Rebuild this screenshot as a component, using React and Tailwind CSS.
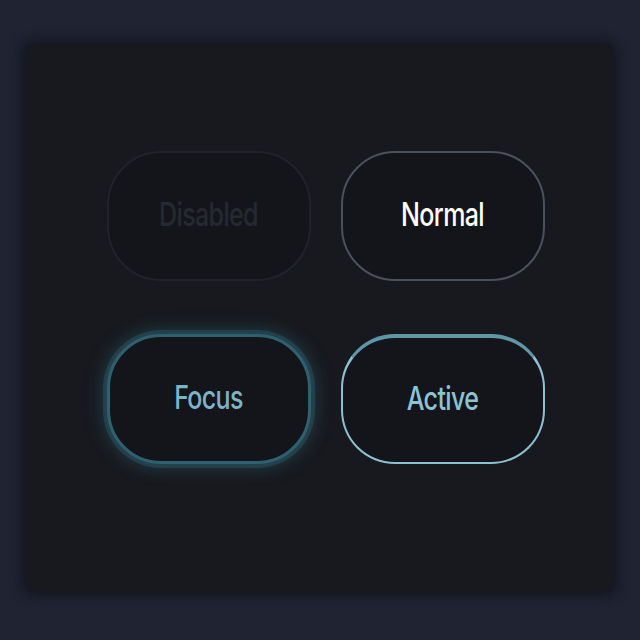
import React from 'react';

const StateButton = ({ label, variant }) => {
    const styles = {
        disabled: 'border-2 border-[#20232b] text-[#262932]',
        normal: 'border-2 border-[#4b505d] text-white',
        focus: 'border-[3px] border-[#2f6070] text-[#7db4c8] shadow-[0_0_0_4px_rgba(47,96,112,0.4),0_0_16px_6px_rgba(47,110,125,0.35)]',
        active: 'border-2 border-[#8cc0d3] border-t-[4px] border-t-[#5d97a8] text-[#8cc2d6]',
    };

    return (
        <button
            type="button"
            disabled={variant === 'disabled'}
            className={`w-[204px] h-[130px] rounded-[54px] bg-[#14151b] flex items-center justify-center ${styles[variant]}`}
        >
            <span className="text-[25px] font-medium tracking-tight scale-y-[1.3] font-['Inter','Noto_Sans',sans-serif]">{label}</span>
        </button>
    );
};

const App = () => {
    return (
        <div className="w-[640px] h-[640px] bg-[#1f2332] pt-[45px] px-[26px]">
            <div className="w-[587px] h-[546px] bg-[#18191e] rounded-lg shadow-[0_0_12px_4px_rgba(10,12,18,0.6)] flex items-center justify-center pb-[22px] pl-[12px]">
                <div className="grid grid-cols-2 gap-x-[30px] gap-y-[53px]">
                    <StateButton label="Disabled" variant="disabled" />
                    <StateButton label="Normal" variant="normal" />
                    <StateButton label="Focus" variant="focus" />
                    <StateButton label="Active" variant="active" />
                </div>
            </div>
        </div>
    );
};

export default App;
